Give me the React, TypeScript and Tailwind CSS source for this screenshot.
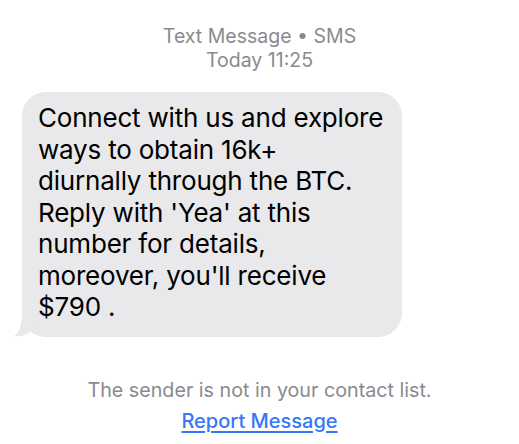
import React from 'react'

function App() {
  return (
    <div className="w-[519px] h-[444px] bg-white overflow-hidden" style={{ fontFamily: 'Inter, "Noto Sans", sans-serif' }}>
      <div className="pt-[24px] text-center text-[#8a8a8e] text-[19.5px] leading-[24px]">
        <p>Text Message • SMS</p>
        <p>Today 11:25</p>
      </div>

      <div className="mt-[20px] pl-[22px]">
        <div className="relative w-[380px]">
          <div className="bg-[#e9e9eb] rounded-[24px] pl-[16px] pr-[12px] pt-[10px] pb-[14px] text-[26px] leading-[31.5px] text-black tracking-[-0.2px]">
            Connect with us and explore<br />
            ways to obtain 16k+<br />
            diurnally through the BTC.<br />
            Reply with 'Yea' at this<br />
            number for details,<br />
            moreover, you'll receive<br />
            $790 .
          </div>
          <svg className="absolute left-[-8px] bottom-0" width="24" height="22" viewBox="0 0 24 22">
            <path d="M8 0 C8 10 5 18 0 21 C8 22 14 19 18 15 L24 0 Z" fill="#e9e9eb" />
          </svg>
        </div>
      </div>

      <div className="mt-[41px] text-center">
        <p className="text-[#8a8a8e] text-[19.7px] leading-[24px]">The sender is not in your contact list.</p>
        <p className="mt-[7px] text-[#3478f6] text-[20px] leading-[24px] font-medium underline underline-offset-[3px]">Report Message</p>
      </div>
    </div>
  )
}

export default App
